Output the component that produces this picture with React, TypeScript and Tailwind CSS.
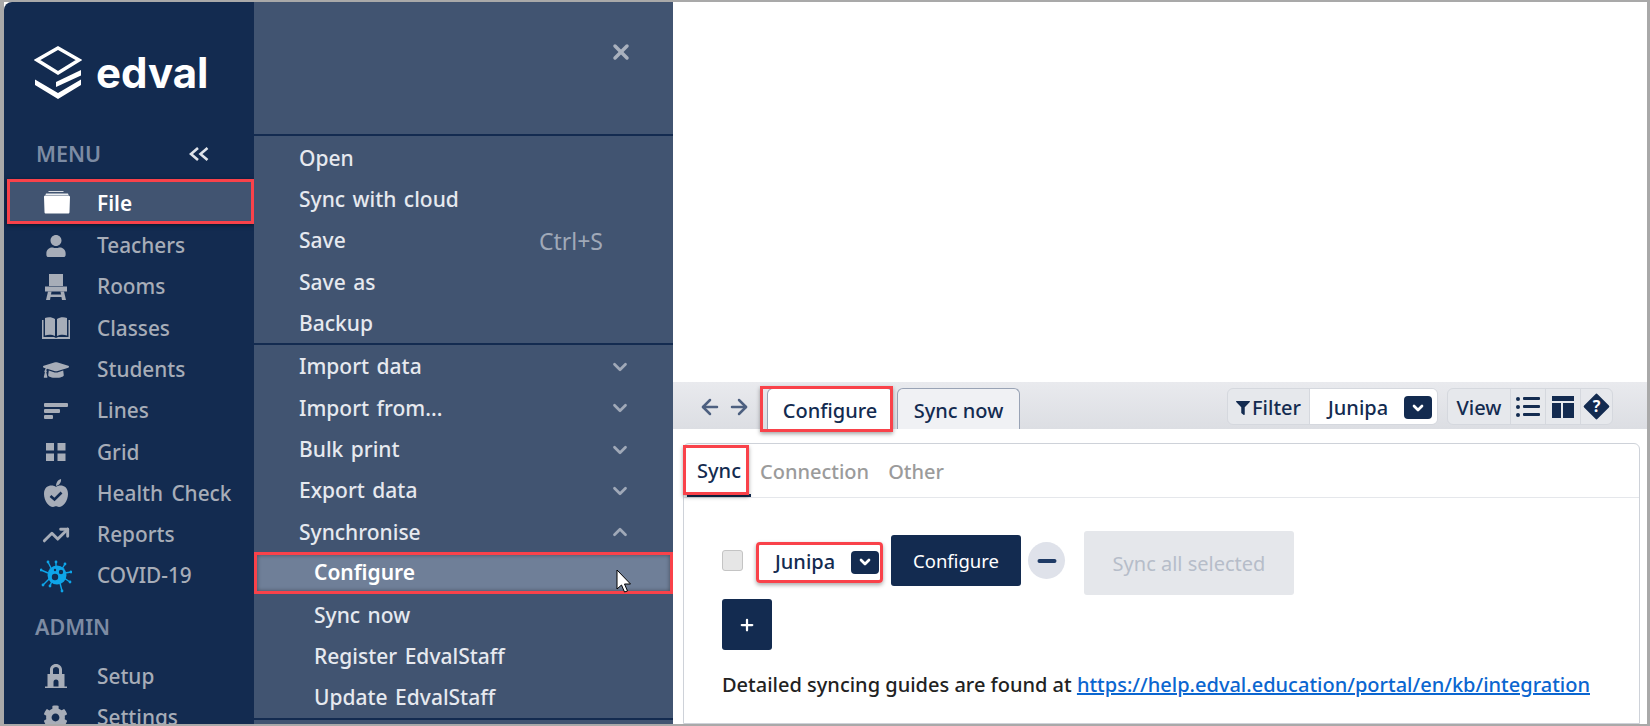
import { ChevronDown, ChevronUp, X, ArrowLeft, ArrowRight, Minus, Plus, TrendingUp } from 'lucide-react';
import { FaFilter, FaGraduationCap, FaUser, FaCog } from 'react-icons/fa';

const font = 'font-["Noto_Sans","Open_Sans",sans-serif]';

function FileIcon() {
  return (
    <svg width="28" height="24" viewBox="0 0 28 24" fill="currentColor">
      <path d="M6 1h14l1 1H5z" opacity="0.8" />
      <path d="M3 3.500h22l.5 1.500H2.500z" opacity="0.9" />
      <path d="M1 7c0-1 .6-1.500 1.500-1.500H25c1 0 2 .5 2 1.500l-.5 15c0 1-.6 1.500-1.500 1.500H3c-1 0-1.500-.5-1.500-1.500z" />
    </svg>
  );
}

function ChairIcon() {
  return (
    <svg width="22" height="26" viewBox="0 0 22 26" fill="currentColor">
      <path d="M4 0h14v12H4z" />
      <path d="M0 12.500h22v5H0z" />
      <path d="M3 17.500h3.500L5 26H1z" />
      <path d="M15.500 17.500H19l2 8.500h-4z" />
      <path d="M5 20.500h12v2.500H5z" />
    </svg>
  );
}

function BookIcon() {
  return (
    <svg width="28" height="22" viewBox="0 0 28 22" fill="currentColor">
      <path d="M3 1c3-1 7-1 10 1v17c-3-1.500-7-1.500-10-.5z" />
      <path d="M25 1c-3-1-7-1-10 1v17c3-1.500 7-1.500 10-.5z" />
      <path d="M0 3h1.500v17H12l2 1 2-1h10.500V3H28v19H0z" />
    </svg>
  );
}

function LinesIcon() {
  return (
    <svg width="24" height="16" viewBox="0 0 24 16" fill="currentColor">
      <rect x="0" y="0" width="24" height="4" rx="1" />
      <rect x="0" y="6" width="16" height="4" rx="1" />
      <rect x="0" y="12" width="9" height="4" rx="1" />
    </svg>
  );
}

function GridIcon() {
  return (
    <svg width="20" height="18" viewBox="0 0 20 18" fill="currentColor">
      <rect x="0" y="0" width="8" height="7.500" />
      <rect x="11.500" y="0" width="8" height="7.500" />
      <rect x="0" y="10.500" width="8" height="7.500" />
      <rect x="11.500" y="10.500" width="8" height="7.500" />
    </svg>
  );
}

function AppleIcon() {
  return (
    <svg width="26" height="28" viewBox="0 0 26 28">
      <path fill="currentColor" d="M13 8C10 5.500 1 5.500 1 15c0 7 5 13 9 13 1.500 0 2-.7 3-.7s1.500.7 3 .7c4 0 9-6 9-13 0-9.500-9-9.500-12-7z" />
      <path fill="currentColor" d="M13 7c0-3 1.500-6 5-7 .5 3-1.500 6-5 7z" />
      <path fill="none" stroke="#132b50" strokeWidth="2.600" d="M7.500 17l4 3.500 7-7" />
    </svg>
  );
}

function VirusIcon() {
  const spikes = [
    [16, 3, 16, 9], [25, 5, 22, 10], [31, 13, 25, 14], [30, 23, 24, 19], [22, 32, 20, 24],
    [10, 27, 12, 22], [3, 26, 9, 20], [1, 11, 8, 14], [8, 3, 11, 9],
  ];
  return (
    <svg width="32" height="34" viewBox="0 0 32 34" className="text-[#0ea5e9]">
      {spikes.map((s, i) => (
        <g key={i}>
          <line x1={s[0]} y1={s[1]} x2={s[2]} y2={s[3]} stroke="currentColor" strokeWidth="1.400" />
          <circle cx={s[0]} cy={s[1]} r="1.400" fill="currentColor" />
        </g>
      ))}
      <circle cx="17" cy="16" r="9.500" fill="currentColor" />
      <circle cx="15" cy="18" r="3.200" fill="#132b50" />
      <circle cx="21" cy="13" r="2.200" fill="#132b50" />
      <circle cx="15" cy="11" r="1.200" fill="#132b50" />
    </svg>
  );
}

function LockIcon() {
  return (
    <svg width="24" height="24" viewBox="0 0 24 24" fill="currentColor">
      <path fillRule="evenodd" d="M12 0c3.500 0 6 2.500 6 5.500V10h2.500v12.500H23V24H1v-1.500h2.500V10H6V5.500C6 2.500 8.500 0 12 0zM9 5.500V10h6V5.500C15 4 13.500 3 12 3S9 4 9 5.500zM9.500 22.500V18a2.500 2.500 0 015 0v4.500z" />
    </svg>
  );
}

function Logo() {
  return (
    <div className="flex h-[130px] items-start pl-[30px] pt-[43px]">
      <svg width="48" height="56" viewBox="0 0 48 56" fill="none" stroke="white">
        <path d="M24 3L45 15 24 28 3 15z" strokeWidth="3.500" />
        <path d="M47 25v5.500L22 42v-5z" fill="white" stroke="none" />
        <path d="M47 34.500v5.500L24 54 1 40v-5.500l23 13.500z" fill="white" stroke="none" />
      </svg>
      <span className='ml-[14px] mt-[3px] font-["Inter",sans-serif] text-[42px] leading-[50px] font-bold text-white'>edval</span>
    </div>
  );
}

const mainItems = [
  { label: 'Teachers', icon: <FaUser size={22} /> },
  { label: 'Rooms', icon: <ChairIcon /> },
  { label: 'Classes', icon: <BookIcon /> },
  { label: 'Students', icon: <FaGraduationCap size={26} /> },
  { label: 'Lines', icon: <LinesIcon /> },
  { label: 'Grid', icon: <GridIcon /> },
  { label: 'Health Check', icon: <AppleIcon /> },
  { label: 'Reports', icon: <TrendingUp size={28} strokeWidth={2.500} /> },
  { label: 'COVID-19', icon: <VirusIcon /> },
];

function NavRow({ label, icon }: { label: string; icon: React.ReactNode }) {
  return (
    <div className="flex h-[41.300px] items-center text-[#a7adb8]">
      <span className="flex w-[93px] justify-center pl-[15px] pr-[5px]">{icon}</span>
      <span className="text-[20.800px] font-medium [word-spacing:3px]">{label}</span>
    </div>
  );
}

function Sidebar() {
  return (
    <aside className="h-full w-[250px] shrink-0 overflow-hidden rounded-tl-lg bg-[#132b50]">
      <Logo />
      <div className="flex h-[44px] items-center justify-between pl-[32px] pr-[45px] text-[21.500px] font-semibold text-[#7d8ba3]">
        <span>MENU</span>
        <svg width="20" height="14" viewBox="0 0 20 14" fill="none" stroke="#dfe3ea" strokeWidth="2.600">
          <path d="M9 1L2 7l7 6" />
          <path d="M18.500 1l-7 6 7 6" />
        </svg>
      </div>
      <div className="ml-[3px] mt-[3px] flex h-[45px] items-center border-[3px] border-[#f9424a] bg-[#415471] text-white shadow-[0_1px_4px_rgba(0,0,0,0.5)]">
        <span className="flex w-[87px] justify-center pl-[12px] pr-[5px]"><FileIcon /></span>
        <span className="pt-[4px] text-[20.800px] font-semibold">File</span>
      </div>
      <div className="pt-[1px]">
        {mainItems.map((item) => (
          <NavRow key={item.label} label={item.label} icon={item.icon} />
        ))}
      </div>
      <div className="mt-[8px] flex h-[44px] items-center pl-[31px] text-[21.500px] font-semibold text-[#7d8ba3]">ADMIN</div>
      <div className="mt-[7px]">
        <NavRow label="Setup" icon={<LockIcon />} />
        <NavRow label="Settings" icon={<FaCog size={25} />} />
      </div>
    </aside>
  );
}

function MenuRow({ label, right, sub }: { label: string; right?: React.ReactNode; sub?: boolean }) {
  return (
    <div className={`flex h-[41.300px] items-center justify-between pr-[70px] pt-[2px] text-[21px] font-medium text-[#e6e9ef] [word-spacing:2px] ${sub ? 'pl-[60px]' : 'pl-[45px]'}`}>
      <span>{label}</span>
      {right}
    </div>
  );
}

function FileMenu() {
  const down = <ChevronDown size={22} strokeWidth={3} className="mr-[-28px] text-[#a0a9b8]" />;
  return (
    <div className="h-full w-[419px] shrink-0 bg-[#415471]">
      <div className="flex h-[134px] justify-end border-b-2 border-[#132b50] pr-[40px] pt-[38px]">
        <X size={24} strokeWidth={3.500} className="text-[#a9b1be]" />
      </div>
      <div className="border-b-2 border-[#132b50] pt-[1px]">
        <MenuRow label="Open" />
        <MenuRow label="Sync with cloud" />
        <MenuRow label="Save" right={<span className="text-[23px] font-normal text-[#a0a9b8]">Ctrl+S</span>} />
        <MenuRow label="Save as" />
        <MenuRow label="Backup" />
      </div>
      <div className="border-b-2 border-[#132b50]">
        <MenuRow label="Import data" right={down} />
        <MenuRow label="Import from..." right={down} />
        <MenuRow label="Bulk print" right={down} />
        <MenuRow label="Export data" right={down} />
        <MenuRow label="Synchronise" right={<ChevronUp size={22} strokeWidth={3} className="mr-[-28px] text-[#a0a9b8]" />} />
        <div className="relative flex h-[42px] items-center border-[3px] border-[#f9424a] bg-[#6f7f98] pl-[57px] text-[21px] font-semibold text-white shadow-[inset_0_0_4px_rgba(0,0,0,0.4)]">
          Configure
          <svg className="absolute left-[359px] top-[14px]" width="18" height="26" viewBox="0 0 18 26">
            <path d="M1 1v19l4.500-4 3 7 3-1-3-7h6z" fill="white" stroke="black" strokeWidth="1" />
          </svg>
        </div>
        <MenuRow sub label="Sync now" />
        <MenuRow sub label="Register EdvalStaff" />
        <MenuRow sub label="Update EdvalStaff" />
      </div>
    </div>
  );
}

function SelectBtn() {
  return (
    <span className="flex h-[23px] w-[28px] items-center justify-center rounded-[4px] bg-[#132b50] text-white">
      <ChevronDown size={16} strokeWidth={4} />
    </span>
  );
}

function Toolbar() {
  return (
    <div className="flex h-[47px] shrink-0 items-end justify-between bg-gradient-to-b from-[#e9eaee] to-[#dcdee3] pr-[34px] text-[20px] font-medium text-[#132b50]">
      <div className="flex items-end">
        <div className="mb-[10px] flex w-[57px] gap-[5px] pl-[25px] text-[#4d6080]">
          <ArrowLeft size={24} strokeWidth={2.500} className="shrink-0" />
          <ArrowRight size={24} strokeWidth={2.500} className="shrink-0" />
        </div>
        <div className="ml-[37px] flex h-[41px] w-[126px] items-center justify-center rounded-t-md border border-b-0 border-[#99a3b5] bg-white pt-[3px]">Configure</div>
        <div className="ml-[4px] flex h-[41px] w-[123px] items-center justify-center rounded-t-md border border-b-0 border-[#99a3b5] bg-[#f0f1f4] pt-[3px]">Sync now</div>
      </div>
      <div className="mb-[4px] flex h-[37px] gap-[9px]">
        <div className="flex items-stretch overflow-hidden rounded-md border border-[#d5d8de] bg-[#e6e8ec]">
          <span className="flex w-[82px] items-center justify-center gap-[2px] border-r border-[#d5d8de] pt-[2px]"><FaFilter size={14} />Filter</span>
          <span className="flex w-[127px] items-center justify-between bg-white pl-[18px] pr-[5px] pt-[2px]">Junipa<SelectBtn /></span>
        </div>
        <div className="flex items-stretch overflow-hidden rounded-md border border-[#d5d8de] bg-[#e6e8ec]">
          <span className="flex w-[63px] items-center justify-center border-r border-[#d5d8de] pt-[2px]">View</span>
          <span className="flex w-[35px] items-center justify-center border-r border-[#d5d8de]">
            <svg width="24" height="22" viewBox="0 0 24 22" fill="#132b50">
              <rect x="0" y="1" width="4" height="4" rx="2" /><rect x="7" y="1" width="17" height="3" rx="1" />
              <rect x="0" y="9" width="4" height="4" rx="2" /><rect x="7" y="9" width="17" height="3" rx="1" />
              <rect x="0" y="17" width="4" height="4" rx="2" /><rect x="7" y="17" width="17" height="3" rx="1" />
            </svg>
          </span>
          <span className="flex w-[35px] items-center justify-center border-r border-[#d5d8de]">
            <svg width="22" height="22" viewBox="0 0 22 22" fill="#132b50">
              <rect x="0" y="0" width="22" height="5" /><rect x="0" y="7" width="9" height="15" /><rect x="11" y="7" width="11" height="15" />
            </svg>
          </span>
          <span className="flex w-[31px] items-center justify-center">
            <svg width="31" height="31" viewBox="0 0 31 31">
              <rect x="6" y="6" width="19" height="19" rx="1.500" transform="rotate(45 15.500 15.500)" fill="#132b50" />
              <text x="15.500" y="21" textAnchor="middle" fontSize="16" fontWeight="700" fill="white" fontFamily="Noto Sans">?</text>
            </svg>
          </span>
        </div>
      </div>
    </div>
  );
}

function SyncPanel() {
  return (
    <div className="ml-[10px] mr-[7px] mt-[14px] grow rounded-t-md border border-[#ced2d9] bg-white">
      <div className="flex h-[54px] items-end border-b border-[#e5e7eb] pl-[3px] text-[20px] font-medium">
        <span className="flex h-[50px] w-[64px] items-center justify-center border-b-[3px] border-[#132b50] pt-[1px] text-[#132b50]">Sync</span>
        <span className="mb-[3px] flex h-[47px] items-center pl-[9px] pt-[2px] text-[#9b9b9b]">Connection</span>
        <span className="mb-[3px] flex h-[47px] items-center pl-[19px] pt-[2px] text-[#9b9b9b]">Other</span>
      </div>
      <div className="pl-[38px] pt-[33px]">
        <div className="flex items-center">
          <span className="mb-[5px] h-[21px] w-[21px] rounded-[3px] border border-[#c4c4c4] bg-[#e6e6e6]" />
          <span className="mb-[2px] ml-[13px] flex h-[41px] w-[127px] items-center justify-between rounded-sm border-[3px] border-[#f9424a] pl-[16px] pr-[1px] text-[20px] font-medium text-[#132b50] shadow-[0_2px_4px_rgba(0,0,0,0.35)]">
            Junipa
            <SelectBtn />
          </span>
          <span className="mb-[5px] ml-[8px] flex h-[51px] w-[130px] items-center justify-center rounded-[3px] bg-[#132b50] text-[18.500px] text-white">Configure</span>
          <span className="mb-[5px] ml-[7px] flex h-[37px] w-[37px] items-center justify-center rounded-full bg-[#dfe2ea] text-[#1f3b66]">
            <Minus size={26} strokeWidth={3.500} />
          </span>
          <span className="ml-[19px] flex h-[64px] w-[210px] items-center justify-center rounded-[3px] bg-[#e5e7eb] pt-[1px] text-[20px] text-[#b6bdc9]">Sync all selected</span>
        </div>
        <span className="mt-[4px] flex h-[51px] w-[50px] items-center justify-center rounded-[3px] bg-[#132b50] text-white">
          <Plus size={18} strokeWidth={3} />
        </span>
        <p className="mt-[20px] text-[20px] font-medium text-[#222]">
          Detailed syncing guides are found at <span className="text-[#0b66d0] underline">https://help.edval.education/portal/en/kb/integration</span>
        </p>
      </div>
    </div>
  );
}

export default function App() {
  return (
    <div className={`relative h-[726px] w-[1650px] overflow-hidden border-y-2 border-l-4 border-r-[3px] border-[#a9a9a9] bg-white ${font}`}>
      <div className="flex h-full">
        <Sidebar />
        <FileMenu />
        <main className="flex min-w-0 grow flex-col">
          <div className="h-[380px] shrink-0" />
          <Toolbar />
          <SyncPanel />
        </main>
      </div>
      {/* Red annotation boxes */}
      <div className="absolute left-[756px] top-[384px] h-[46px] w-[133px] border-[3px] border-[#f9424a] shadow-[0_2px_4px_rgba(0,0,0,0.35)]" />
      <div className="absolute left-[679px] top-[443px] h-[50px] w-[66px] border-[3px] border-[#f9424a] shadow-[0_2px_4px_rgba(0,0,0,0.35)]" />
    </div>
  );
}
